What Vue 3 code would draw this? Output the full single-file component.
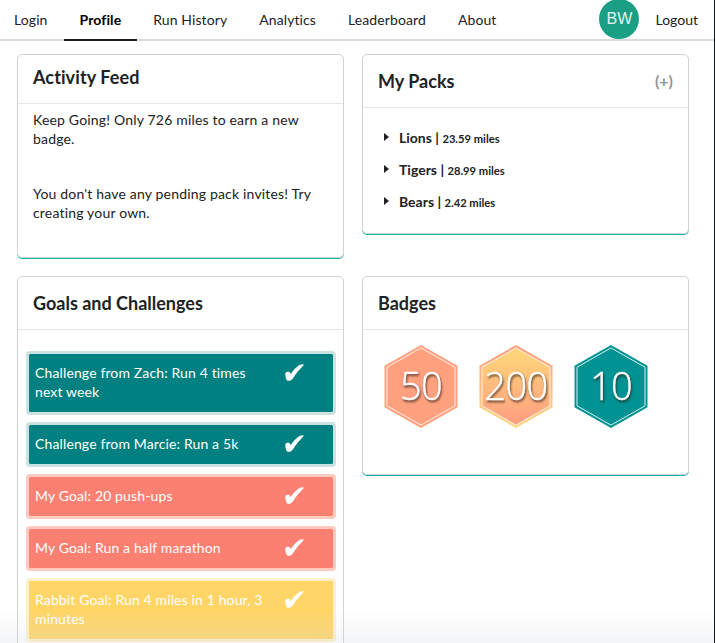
<script setup>
const links = ['Login', 'Profile', 'Run History', 'Analytics', 'Leaderboard', 'About']
const active = 'Profile'

const packs = [
  { name: 'Lions', miles: '23.59' },
  { name: 'Tigers', miles: '28.99' },
  { name: 'Bears', miles: '2.42' },
]

const goals = [
  { kind: 'challenge', text: 'Challenge from Zach: Run 4 times next week' },
  { kind: 'challenge', text: 'Challenge from Marcie: Run a 5k' },
  { kind: 'personal', text: 'My Goal: 20 push-ups' },
  { kind: 'personal', text: 'My Goal: Run a half marathon' },
  { kind: 'rabbit', text: 'Rabbit Goal: Run 4 miles in 1 hour, 3 minutes' },
]

const badges = [
  { value: 50, outer: '#ffa07f', inner: '#ffa07f' },
  { value: 200, outer: 'url(#rim)', inner: 'url(#fade)' },
  { value: 10, outer: '#019393', inner: '#019393' },
]
</script>

<template>
  <div class="page">
    <nav class="nav">
      <a v-for="link in links" :key="link" class="link" :class="{ active: link === active }">{{ link }}</a>
      <div class="account">
        <span class="avatar">BW</span>
        <a class="logout">Logout</a>
      </div>
    </nav>

    <main class="grid">
      <section class="card feed">
        <h2 class="title">Activity Feed</h2>
        <div class="messages">
          <p>Keep Going! Only 726 miles to earn a new badge.</p>
          <p>You don't have any pending pack invites! Try creating your own.</p>
        </div>
      </section>

      <section class="card packs">
        <h2 class="title">My Packs <span class="add">(+)</span></h2>
        <ul class="pack-list">
          <li v-for="pack in packs" :key="pack.name">
            <svg class="caret" width="5" height="8" viewBox="0 0 5 8"><path d="M0 0L5 4L0 8Z" fill="#1f2021" /></svg>
            <span>{{ pack.name }} | <small>{{ pack.miles }} miles</small></span>
          </li>
        </ul>
      </section>

      <section class="card goals">
        <h2 class="title">Goals and Challenges</h2>
        <div class="goal-list">
          <div v-for="goal in goals" :key="goal.text" class="goal" :class="goal.kind">
            <span class="goal-text">{{ goal.text }}</span>
            <svg class="check" width="19" height="17" viewBox="0 0 19 17">
              <path d="M0.4 9.2C1.2 7.7 4.1 7.3 5 8.6C5.3 9.1 5.4 9.6 5.6 10.2C8.2 6.2 11.5 2.6 15 0.8C16.2 0.2 17.7 0.1 18.5 0.5C18.9 0.8 18.7 1.2 18.3 1.6C14.6 5.4 11.2 9.3 8.2 14C7 15.9 5.6 16.8 3.8 16.8C2.1 16.8 1.5 16 1 14.2C0.5 12.4 0 10.4 0.4 9.2Z" fill="#fff" />
            </svg>
          </div>
        </div>
      </section>

      <section class="card badges">
        <h2 class="title">Badges</h2>
        <div class="badge-list">
          <svg v-for="badge in badges" :key="badge.value" class="badge" width="74" height="83" viewBox="0 0 74 83">
            <defs>
              <linearGradient id="fade" x1="0" y1="0" x2="0" y2="1">
                <stop offset="0.1" stop-color="#ffd37a" />
                <stop offset="1" stop-color="#ff9c80" />
              </linearGradient>
              <linearGradient id="rim" x1="0" y1="0" x2="0" y2="1">
                <stop offset="0.1" stop-color="#ffa07f" />
                <stop offset="1" stop-color="#ffd87c" />
              </linearGradient>
            </defs>
            <path d="M37 0L73.5 20.8V62.2L37 83L0.5 62.2V20.8Z" :fill="badge.outer" />
            <path d="M37 2.9L71 22.2V60.8L37 80.1L3 60.8V22.2Z" :fill="badge.inner" stroke="#fff" stroke-opacity="0.85" />
            <text x="37" y="55.2" text-anchor="middle" class="badge-number">{{ badge.value }}</text>
          </svg>
        </div>
      </section>
    </main>
    <div class="haze"></div>
  </div>
</template>

<style>
body {
  margin: 0;
  background: #fff;
}
</style>

<style scoped>
.page {
  box-sizing: border-box;
  position: relative;
  width: 715px;
  height: 643px;
  overflow: hidden;
  border-right: 1px solid #17181b;
  background: #fff;
  color: #212223;
  font-family: Lato, 'Liberation Sans', sans-serif;
  font-size: 14px;
}
.nav {
  display: flex;
  box-sizing: border-box;
  height: 41px;
  padding-right: 16px;
  margin-left: -2px;
  border-bottom: 2px solid #d9dada;
}
.link {
  box-sizing: border-box;
  height: 41px;
  padding: 0 16px;
  border-bottom: 2px solid transparent;
  letter-spacing: 0.1px;
  line-height: 40px;
  white-space: nowrap;
}
.link.active {
  border-color: #1b1c1d;
  color: #000;
  font-weight: 700;
}
.account {
  display: flex;
  gap: 16px;
  margin-left: auto;
  line-height: 40px;
}
.avatar {
  width: 40px;
  height: 40px;
  margin-top: -1px;
  border-radius: 50%;
  background: #1a9f85;
  color: #e0f3ef;
  font-family: 'Liberation Sans', sans-serif;
  font-size: 16px;
  text-align: center;
}
.grid {
  display: grid;
  grid-template-columns: 327px 327px;
  grid-template-rows: 204px auto;
  gap: 18px;
  align-items: start;
  padding: 13px 0 0 17px;
}
.card {
  box-sizing: border-box;
  border: 1px solid #d1d2d3;
  border-radius: 5px;
  box-shadow: 0 1px 0 #0fb2ae;
}
.title {
  display: flex;
  box-sizing: border-box;
  justify-content: space-between;
  height: 53px;
  margin: 0;
  padding: 0 15px;
  border-bottom: 1px solid #e6e6e6;
  font-size: 18px;
  font-weight: 700;
  line-height: 52px;
}
.feed {
  height: 204px;
}
.feed .title {
  height: 49px;
  letter-spacing: 0.1px;
  line-height: 45px;
}
.messages {
  display: grid;
  gap: 36px;
  padding: 6px 15px;
  letter-spacing: 0.18px;
  line-height: 19px;
}
.messages p {
  margin: 0;
}
.packs {
  height: 180px;
}
.add {
  color: #929393;
  font-size: 16px;
}
.pack-list {
  display: grid;
  grid-auto-rows: 32px;
  margin: 0;
  padding: 14px 21px;
  font-weight: 700;
  line-height: 32px;
  list-style: none;
}
.pack-list li {
  display: flex;
  gap: 10px;
}
.caret {
  margin-top: 11px;
}
small {
  font-size: 11.2px;
}
.goals {
  height: 400px;
}
.goal-list {
  display: grid;
  gap: 7px;
  padding: 21px 7px 0 8px;
}
.goal {
  display: flex;
  justify-content: space-between;
  padding: 9px 29px 11px 6px;
  border: 3px solid;
  border-radius: 4px;
  background-clip: padding-box;
  color: #fff;
  letter-spacing: 0.13px;
  line-height: 19px;
}
.goal-text {
  width: 236px;
}
.check {
  flex: none;
  margin-top: 1px;
}
.challenge {
  border-color: #cce2e2;
  background-color: #008080;
}
.personal {
  border-color: #fdcabf;
  background-color: #fb8072;
}
.rabbit {
  border-color: #fff0c9;
  background-color: #ffd567;
}
.badges {
  height: 199px;
}
.badge-list {
  display: flex;
  gap: 21px;
  padding: 15px 20.5px;
}
.badge-number {
  fill: #fff;
  stroke: #fff;
  stroke-width: 0.4px;
  font-family: 'Open Sans', sans-serif;
  font-size: 38px;
  font-weight: 300;
  letter-spacing: -0.6px;
  filter: drop-shadow(1px 2px 1px rgba(50, 35, 25, 0.75));
}
.haze {
  position: absolute;
  inset: auto 0 0;
  height: 33px;
  background: linear-gradient(rgba(210, 215, 222, 0), rgba(210, 215, 222, 0.25));
}
</style>
